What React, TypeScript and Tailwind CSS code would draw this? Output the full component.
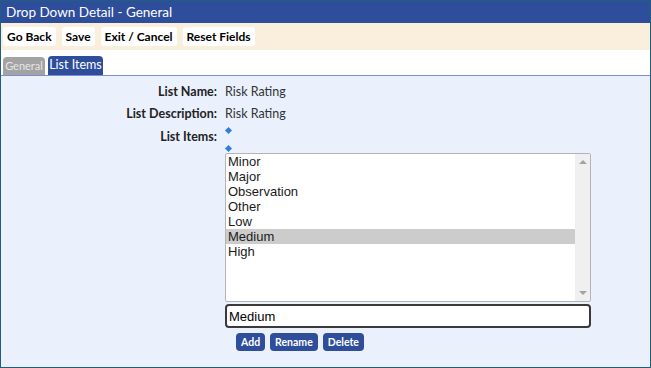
const items = ['Minor', 'Major', 'Observation', 'Other', 'Low', 'Medium', 'High'];

function Diamond() {
  return <div className="w-[5px] h-[5px] bg-[#2f7fd6] rotate-45" />;
}

export default function App() {
  const selected = 'Medium';

  return (
    <div className="w-[651px] h-[368px] border border-[#1d5f7c] bg-[#eaf1fd] flex flex-col font-['Lato',sans-serif] overflow-hidden">
      {/* Title bar */}
      <div className="h-[22px] bg-[#2e4d9b] text-white text-[13.5px] leading-[22px] pl-[5px] shrink-0">
        Drop Down Detail - General
      </div>

      {/* Toolbar */}
      <div className="h-[27px] bg-[#faeedc] flex items-center gap-[6px] px-[2px] shrink-0">
        {['Go Back', 'Save', 'Exit / Cancel', 'Reset Fields'].map((b) => (
          <button
            key={b}
            className="h-[19px] px-[4px] bg-white rounded-[3px] text-[12px] font-bold text-black leading-[19px]"
          >
            {b}
          </button>
        ))}
      </div>

      {/* Tabs */}
      <div className="h-[26px] bg-white flex items-end gap-[3px] px-[2px] border-b border-[#7b8fd4] shrink-0">
        <div className="w-[42px] h-[18px] bg-[#a3a3a3] rounded-t-[4px] text-[11px] text-[#e6e6e6] flex items-center justify-center">
          General
        </div>
        <div className="w-[55px] h-[19px] bg-[#2e4d9b] rounded-t-[4px] text-[12.5px] text-white flex items-center justify-center">
          List Items
        </div>
      </div>

      {/* Form */}
      <div className="flex-1 pt-[8px]">
        <div className="grid grid-cols-[216px_1fr] gap-x-[8px] gap-y-[6px] text-[12.5px] leading-[16px]">
          <div className="text-right font-bold text-[#222]">List Name:</div>
          <div className="text-[#333]">Risk Rating</div>
          <div className="text-right font-bold text-[#222]">List Description:</div>
          <div className="text-[#333]">Risk Rating</div>
          <div className="text-right font-bold text-[#222] pt-[1px]">List Items:</div>
          <div className="flex flex-col">
            <div className="h-[18px] pl-[1px] flex items-start">
              <Diamond />
            </div>
            <div className="h-[7px] pl-[1px] flex items-start">
              <Diamond />
            </div>

            {/* Listbox */}
            <div className="w-[366px] h-[149px] border border-[#b4b4b4] rounded-[2px] bg-white flex font-['Liberation_Sans',Arial,sans-serif]">
              <div className="flex-1 flex flex-col">
                {items.map((it) => (
                  <div
                    key={it}
                    className={`h-[15px] leading-[15px] text-[13px] pl-[2px] text-[#1a1a1a] ${
                      it === selected ? 'bg-[#cccccc]' : ''
                    }`}
                  >
                    {it}
                  </div>
                ))}
              </div>
              <div className="w-[15px] bg-[#f0f0f0] flex flex-col justify-between items-center py-[6px]">
                <div className="w-0 h-0 border-l-[4px] border-r-[4px] border-b-[4px] border-l-transparent border-r-transparent border-b-[#a3a3a3]" />
                <div className="w-0 h-0 border-l-[4px] border-r-[4px] border-t-[4px] border-l-transparent border-r-transparent border-t-[#a3a3a3]" />
              </div>
            </div>

            {/* Input */}
            <input
              readOnly
              value={selected}
              className="mt-[2px] w-[366px] h-[24px] border-2 border-[#3a3a3a] rounded-[4px] bg-white px-[2px] text-[13px] text-black font-['Liberation_Sans',Arial,sans-serif] outline-none"
            />

            {/* Actions */}
            <div className="flex gap-[5px] mt-[5px] ml-[11px]">
              {['Add', 'Rename', 'Delete'].map((b) => (
                <button
                  key={b}
                  className="h-[18px] px-[5px] bg-[#2e4d9b] rounded-[4px] text-white text-[10.5px] font-bold leading-[18px]"
                >
                  {b}
                </button>
              ))}
            </div>
          </div>
        </div>
      </div>
    </div>
  );
}
